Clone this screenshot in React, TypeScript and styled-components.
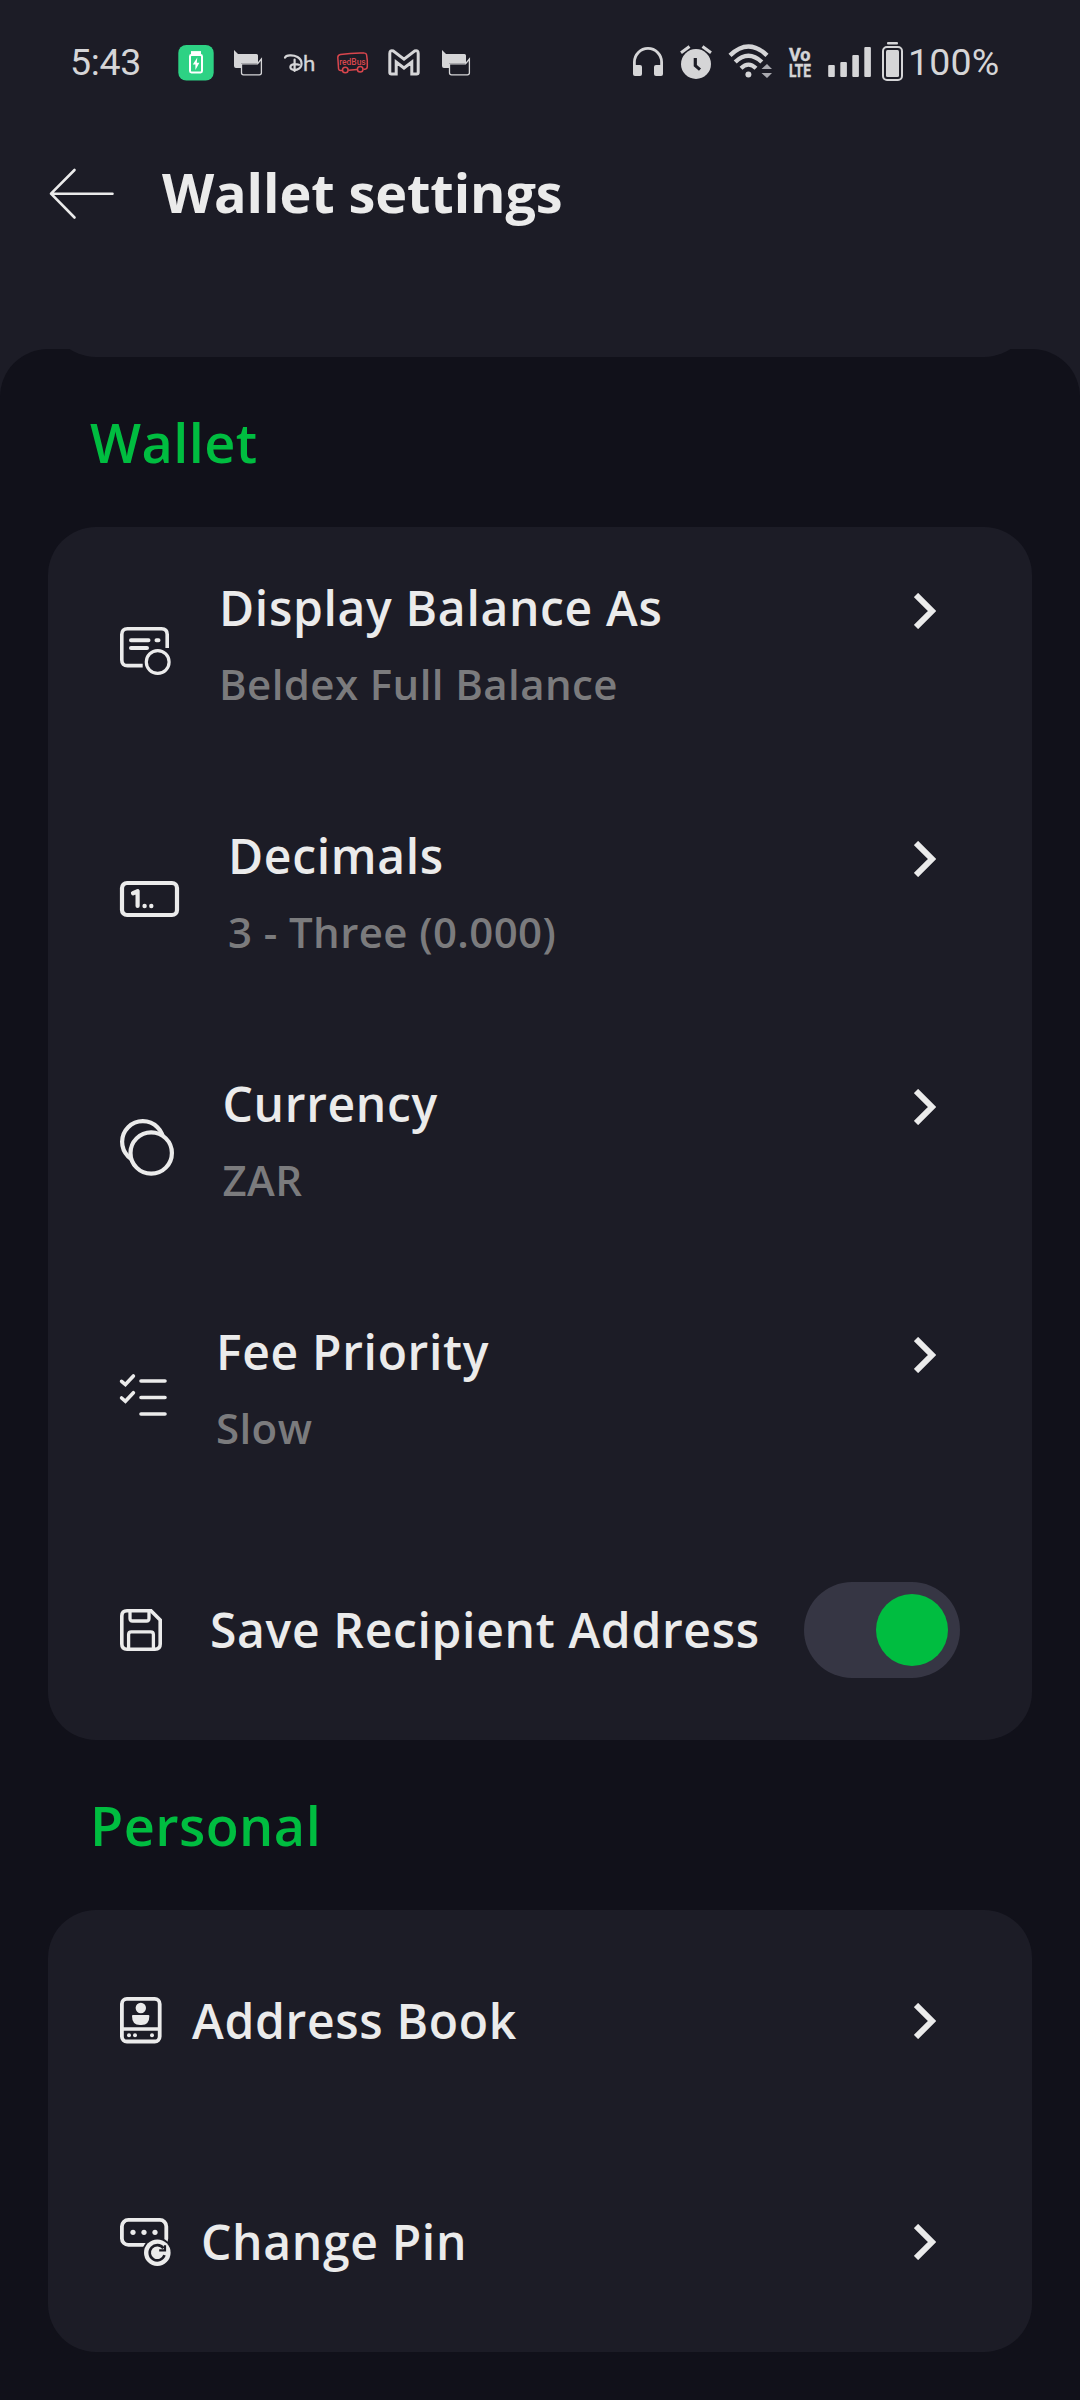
import React from "react";
import styled, { createGlobalStyle } from "styled-components";

const color = {
  panel: "#1c1c26",
  sheet: "#11111a",
  text: "#ebebeb",
  muted: "#7b7b7d",
  green: "#00bd40",
  track: "#363644",
  status: "#d5d5d7",
};

const GlobalStyle = createGlobalStyle`
  *, *::before, *::after { box-sizing: border-box; }
  body { margin: 0; background: ${color.sheet}; }
`;

const Page = styled.div`
  width: 1080px;
  height: 2400px;
  display: flex;
  flex-direction: column;
  overflow: hidden;
  background: ${color.panel};
  color: ${color.text};
  font-family: "Open Sans", "Noto Sans", sans-serif;
`;

const StatusBar = styled.div`
  height: 124px;
  padding: 42px 80px 42px 70px;
  display: flex;
  justify-content: space-between;
  color: ${color.status};
`;

const StatusGroup = styled.div`
  display: flex;
  height: 40px;
`;

const StatusText = styled.span<{ $w: number; $spacing: number }>`
  width: ${(p) => p.$w}px;
  font: 400 37.5px/41px Roboto, sans-serif;
  letter-spacing: ${(p) => p.$spacing}px;
  white-space: nowrap;
`;

const StatusSvg = styled.svg<{ $gap: number }>`
  flex: none;
  margin-left: ${(p) => p.$gap}px;
  overflow: visible;
`;

const Header = styled.header`
  height: 225px;
  padding: 31px 0 0 48px;
  display: flex;
  align-items: flex-start;
`;

const BackArrow = styled.svg`
  flex: none;
  margin-top: 13px;
`;

const Title = styled.h1`
  margin: 0 0 0 47px;
  font-size: 54px;
  line-height: 74px;
  font-weight: 700;
  letter-spacing: -0.1px;
`;

const Sheet = styled.main`
  flex: 1;
  overflow: hidden;
  border-radius: 48px 48px 0 0;
  background: ${color.sheet};
  padding: 0 48px;
`;

const Card = styled.section`
  border-radius: 48px;
  background: ${color.panel};
`;

const ScrolledCard = styled(Card)`
  height: 108px;
  margin-top: -100px;
`;

const SectionTitle = styled.h2`
  margin: 48px 42px;
  font-size: 54px;
  line-height: 74px;
  font-weight: 600;
  letter-spacing: 0.45px;
  color: ${color.green};
`;

const Row = styled.div<{ $tall?: boolean }>`
  height: ${(p) => (p.$tall ? 248 : 221)}px;
  padding: 0 72px;
  display: flex;
  align-items: center;
`;

const RowIcon = styled.svg`
  flex: none;
  overflow: visible;
`;

const RowText = styled.div<{ $gap: number; $top?: boolean }>`
  flex: 1;
  margin-left: ${(p) => p.$gap}px;
  ${(p) => (p.$top ? "align-self: flex-start; padding-top: 48px;" : "")}
`;

const Label = styled.div`
  font-size: 48px;
  line-height: 65px;
  font-weight: 600;
  letter-spacing: 0.67px;
  white-space: nowrap;
`;

const Value = styled.div`
  margin-top: 15px;
  font-size: 42px;
  line-height: 57px;
  font-weight: 600;
  letter-spacing: 0.4px;
  color: ${color.muted};
`;

const ChevronSvg = styled.svg<{ $top?: boolean }>`
  flex: none;
  margin-right: 24px;
  ${(p) => (p.$top ? "align-self: flex-start; margin-top: 66px;" : "")}
`;

const Track = styled.div`
  flex: none;
  width: 156px;
  height: 96px;
  padding: 12px;
  display: flex;
  justify-content: flex-end;
  border-radius: 48px;
  background: ${color.track};
`;

const Knob = styled.div`
  width: 72px;
  height: 72px;
  border-radius: 50%;
  background: ${color.green};
`;

const Chevron = ({ top }: { top?: boolean }) => (
  <ChevronSvg $top={top} width="22" height="36" viewBox="0 0 22 36">
    <path d="M2 2 L18 18 L2 34" fill="none" stroke={color.text} strokeWidth="6" />
  </ChevronSvg>
);

const Chat = ({ gap }: { gap: number }) => (
  <StatusSvg $gap={gap} width="28" height="40" viewBox="0 0 28 40">
    <path
      d="M0 8 L4 12 H22.5 Q24 12 24 13.5 V21 H7 V26 H2 Q0 26 0 24Z"
      fill="currentColor"
    />
    <path
      d="M27.4 17 L23.5 21.8 H7.5 V31 Q7.5 32.8 9.5 32.8 H25.4 Q27.4 32.8 27.4 31Z"
      fill={color.panel}
      stroke="currentColor"
      strokeWidth="1.3"
    />
  </StatusSvg>
);

const DisplayIcon = () => (
  <RowIcon width="50" height="48" viewBox="0 0 50 48" fill="none" stroke={color.text} strokeWidth="3.6">
    <path d="M22.7 38.6 H7.5 Q1.8 38.6 1.8 33 V7.5 Q1.8 1.8 7.5 1.8 H41.5 Q47.2 1.8 47.2 7.5 V21" />
    <path d="M11 13.3 H28.5 M36.5 13.3 H38.5" strokeLinecap="round" strokeWidth="4" />
    <path d="M11 21 H27" strokeLinecap="round" strokeWidth="4" />
    <circle cx="37.7" cy="35" r="14" fill={color.panel} stroke="none" />
    <circle cx="37.7" cy="35" r="11.4" strokeWidth="3.2" />
  </RowIcon>
);

const DecimalsIcon = () => (
  <RowIcon width="59" height="36" viewBox="0 0 59 36" fill="none" stroke={color.text}>
    <rect x="2" y="2" width="55" height="32" rx="5" strokeWidth="4.2" />
    <path d="M13 12.2 L17.6 10.2 V25" strokeWidth="4.2" strokeLinecap="round" strokeLinejoin="round" />
    <circle cx="24.6" cy="25" r="2.2" fill={color.text} stroke="none" />
    <circle cx="31.3" cy="25" r="2.2" fill={color.text} stroke="none" />
  </RowIcon>
);

const CurrencyIcon = () => (
  <RowIcon width="54" height="57" viewBox="0 0 54 57" fill="none" stroke={color.text} strokeWidth="4.2">
    <circle cx="22.8" cy="22.8" r="20.7" />
    <circle cx="31.2" cy="34" r="20.7" fill={color.panel} />
  </RowIcon>
);

const FeeIcon = () => (
  <RowIcon
    width="47"
    height="43"
    viewBox="0 0 47 43"
    fill="none"
    stroke={color.text}
    strokeWidth="3.6"
    strokeLinecap="round"
  >
    <path d="M21 7 H45 M21 23.5 H45 M21 40 H45" />
    <path d="M1.6 7.3 L5.4 10.6 L13.4 2 M1.6 24 L5.4 27.3 L13.4 18.7" />
  </RowIcon>
);

const SaveIcon = () => (
  <RowIcon width="42" height="42" viewBox="0 0 42 42" fill="none" stroke={color.text} strokeWidth="3.6">
    <path d="M7 1.8 H31 L40.2 11 V35 Q40.2 40.2 35 40.2 H7 Q1.8 40.2 1.8 35 V7 Q1.8 1.8 7 1.8Z" />
    <path d="M10 2 V9.5 Q10 12 12.5 12 H26.5 Q29 12 29 9.5 V2" strokeWidth="3.3" />
    <path d="M8.6 40 V25.5 Q8.6 22.8 11.3 22.8 H30.7 Q33.4 22.8 33.4 25.5 V40" strokeWidth="3.3" />
  </RowIcon>
);

const AddressIcon = () => (
  <RowIcon width="42" height="47" viewBox="0 0 42 47" fill="none" stroke={color.text}>
    <rect x="1.9" y="1.9" width="37.8" height="42.6" rx="5" strokeWidth="3.8" />
    <path d="M2 32 H40" strokeWidth="3.4" />
    <g fill={color.text} stroke="none">
      <circle cx="20.8" cy="11" r="5.2" />
      <path d="M13 18 H28.4 Q29.4 18 29.4 19 Q29.4 28 21.5 28 H20 Q12 28 12 19 Q12 18 13 18Z" />
      <circle cx="9" cy="38.3" r="2" />
      <circle cx="15" cy="38.3" r="2" />
      <circle cx="32" cy="38.3" r="2" />
    </g>
  </RowIcon>
);

const PinIcon = () => (
  <RowIcon width="51" height="48" viewBox="0 0 51 48" fill="none" stroke={color.text}>
    <rect x="1.9" y="1.9" width="44.4" height="25" rx="6.5" strokeWidth="3.8" />
    <g fill={color.text} stroke="none">
      <circle cx="13" cy="14.3" r="2.6" />
      <circle cx="24" cy="14.3" r="2.6" />
      <circle cx="35" cy="14.3" r="2.6" />
      <circle cx="37.3" cy="34.7" r="15.2" fill={color.panel} />
      <circle cx="37.3" cy="34.7" r="13.3" />
    </g>
    <path d="M43.4 30.2 A7.6 7.6 0 1 0 44.5 37.2" stroke={color.panel} strokeWidth="2.6" />
    <path d="M45 27.2 V32.4 H39.2" stroke={color.panel} strokeWidth="2.2" />
  </RowIcon>
);

const walletRows = [
  { icon: <DisplayIcon />, label: "Display Balance As", value: "Beldex Full Balance", gap: 49 },
  { icon: <DecimalsIcon />, label: "Decimals", value: "3 - Three (0.000)", gap: 49 },
  { icon: <CurrencyIcon />, label: "Currency", value: "ZAR", gap: 48.5 },
  { icon: <FeeIcon />, label: "Fee Priority", value: "Slow", gap: 49 },
];

const personalRows = [
  { icon: <AddressIcon />, label: "Address Book" },
  { icon: <PinIcon />, label: "Change Pin" },
];

export default function App() {
  return (
    <Page>
      <GlobalStyle />
      <StatusBar>
        <StatusGroup>
          <StatusText $w={72} $spacing={-0.3}>5:43</StatusText>
          <StatusSvg $gap={36} width="36" height="40" viewBox="0 0 36 40">
            <rect x="0.3" y="3" width="35.4" height="35.6" rx="8" fill="#2dd284" />
            <path d="M13 10.6 H23" stroke="#fff" strokeWidth="3" />
            <rect x="12" y="13" width="12" height="17.4" rx="1.4" fill="none" stroke="#fff" strokeWidth="2" />
            <path d="M19.3 15.6 L14.8 22.6 H17.4 V28 L21.4 20.8 H18.8Z" fill="#fff" />
          </StatusSvg>
          <Chat gap={20} />
          <StatusSvg $gap={22} width="31" height="40" viewBox="0 0 31 40" fill="none" stroke="currentColor">
            <path
              d="M1 15.6 C2 13 9 12.6 13.5 15 C19 18.2 19 25.6 13 27.6 C9.8 28.6 6.2 27.4 6.4 24.8 C6.6 22.2 11 21.6 15 22.8 M10.6 17.6 V29"
              strokeWidth="2.2"
              strokeLinecap="round"
            />
            <text
              x="19"
              y="29"
              fontFamily="Lato, sans-serif"
              fontSize="22"
              fill="currentColor"
              stroke="currentColor"
              strokeWidth="0.4"
            >
              h
            </text>
          </StatusSvg>
          <StatusSvg $gap={22} width="31" height="40" viewBox="0 0 31 40" fill="none" stroke="#d9464d" strokeWidth="1.5">
            <path d="M5 28.4 H3.4 Q2 28.4 1.6 27 L0.8 15.5 Q0.8 13 3.4 12.6 Q15 10.6 27.5 11 Q29.2 11 29.6 13 L30.3 18.5 V24.5 Q30.2 27 28 27.2 H26.5 M11.5 28.2 L20 27.6" />
            <circle cx="8.3" cy="28" r="2.8" />
            <circle cx="23.2" cy="27.2" r="2.8" />
            <text
              x="2.2"
              y="22.6"
              fontFamily="Roboto, sans-serif"
              fontSize="9"
              fontWeight="500"
              textLength="26.5"
              lengthAdjust="spacingAndGlyphs"
              fill="#d9464d"
              stroke="none"
            >
              redBus
            </text>
          </StatusSvg>
          <StatusSvg $gap={20} width="32" height="40" viewBox="0 0 32 40">
            <path
              d="M1.8 11.5 V30.5 Q1.8 32 3.4 32 H8.2 V20 L16 26 L23.8 20 V32 H28.6 Q30.2 32 30.2 30.5 V11.5 Q30.2 7.6 26.6 9 L16 17.2 L5.4 9 Q1.8 7.6 1.8 11.5Z"
              fill="none"
              stroke="currentColor"
              strokeWidth="3"
            />
          </StatusSvg>
          <Chat gap={22} />
        </StatusGroup>
        <StatusGroup>
          <StatusSvg $gap={0} width="30" height="40" viewBox="0 0 30 40">
            <path d="M1.4 28 V20 A13.6 13.6 0 0 1 28.6 20 V28" fill="none" stroke="currentColor" strokeWidth="2.8" />
            <rect x="0" y="23" width="9" height="11" rx="2" fill="currentColor" />
            <rect x="21" y="23" width="9" height="11" rx="2" fill="currentColor" />
          </StatusSvg>
          <StatusSvg $gap={17} width="32" height="40" viewBox="0 0 32 40" fill="none" stroke="currentColor">
            <circle cx="16" cy="22" r="15" fill="currentColor" stroke="none" />
            <path d="M1 10.8 L9.5 4.5 M31 10.8 L22.5 4.5" strokeWidth="3" />
            <path d="M15.3 16 V23.6 L20 27.6" stroke={color.panel} strokeWidth="3.2" />
          </StatusSvg>
          <StatusSvg $gap={16} width="44" height="40" viewBox="0 0 44 40" fill="none" stroke="currentColor">
            <path d="M2 13.4 Q20.4 -4.4 39 13.4" strokeWidth="4.4" />
            <path d="M7.2 20 Q20.4 7.6 33.8 20" strokeWidth="4.4" />
            <path d="M13 26.3 Q20.4 19 28 26.3" strokeWidth="4.2" />
            <circle cx="20.4" cy="32.4" r="3" fill="currentColor" stroke="none" />
            <path d="M33.5 27 L39 22 L44 27Z M33.5 31 L39 36 L44 31Z" fill="#aaaab0" stroke="none" />
          </StatusSvg>
          <StatusSvg
            $gap={17}
            width="22"
            height="40"
            viewBox="0 0 22 40"
            fill="currentColor"
            stroke="currentColor"
            strokeWidth="0.5"
            fontFamily="Roboto, sans-serif"
            fontWeight="700"
            fontSize="18.8"
          >
            <text x="0" y="18.6" textLength="21.5" lengthAdjust="spacingAndGlyphs">
              Vo
            </text>
            <text x="0" y="34.8" textLength="22" lengthAdjust="spacingAndGlyphs">
              LTE
            </text>
          </StatusSvg>
          <StatusSvg $gap={17} width="43" height="40" viewBox="0 0 43 40" fill="currentColor">
            <rect x="0.2" y="23" width="6.6" height="12" rx="1" />
            <rect x="12.3" y="20" width="6.6" height="15" rx="1" />
            <rect x="24.3" y="13" width="6.6" height="22" rx="1" />
            <rect x="36.3" y="5" width="6.6" height="30" rx="1" />
          </StatusSvg>
          <StatusSvg $gap={11} width="21" height="40" viewBox="0 0 21 40" fill="currentColor">
            <rect x="5" y="0" width="11" height="2.4" rx="1" />
            <rect x="1" y="5" width="19" height="33" rx="4" fill="none" stroke="currentColor" strokeWidth="2" />
            <rect x="4" y="8" width="13" height="27" rx="1.5" />
          </StatusSvg>
          <StatusSvg $gap={5} width="0" height="40" />
          <StatusText $w={92} $spacing={0.2}>100%</StatusText>
        </StatusGroup>
      </StatusBar>

      <Header>
        <BackArrow width="67" height="52" viewBox="0 0 67 52">
          <path
            d="M64.5 25.7 H3 M26.5 2 L3 25.7 L26.5 49.5"
            fill="none"
            stroke={color.text}
            strokeWidth="2.6"
            strokeLinecap="round"
            strokeLinejoin="round"
          />
        </BackArrow>
        <Title>Wallet settings</Title>
      </Header>

      <Sheet>
        <ScrolledCard />
        <SectionTitle>Wallet</SectionTitle>
        <Card>
          {walletRows.map((row) => (
            <Row key={row.label} $tall>
              {row.icon}
              <RowText $gap={row.gap} $top>
                <Label>{row.label}</Label>
                <Value>{row.value}</Value>
              </RowText>
              <Chevron top />
            </Row>
          ))}
          <Row>
            <SaveIcon />
            <RowText $gap={48}>
              <Label>Save Recipient Address</Label>
            </RowText>
            <Track>
              <Knob />
            </Track>
          </Row>
        </Card>
        <SectionTitle>Personal</SectionTitle>
        <Card>
          {personalRows.map((row) => (
            <Row key={row.label}>
              {row.icon}
              <RowText $gap={30}>
                <Label>{row.label}</Label>
              </RowText>
              <Chevron />
            </Row>
          ))}
        </Card>
      </Sheet>
    </Page>
  );
}
